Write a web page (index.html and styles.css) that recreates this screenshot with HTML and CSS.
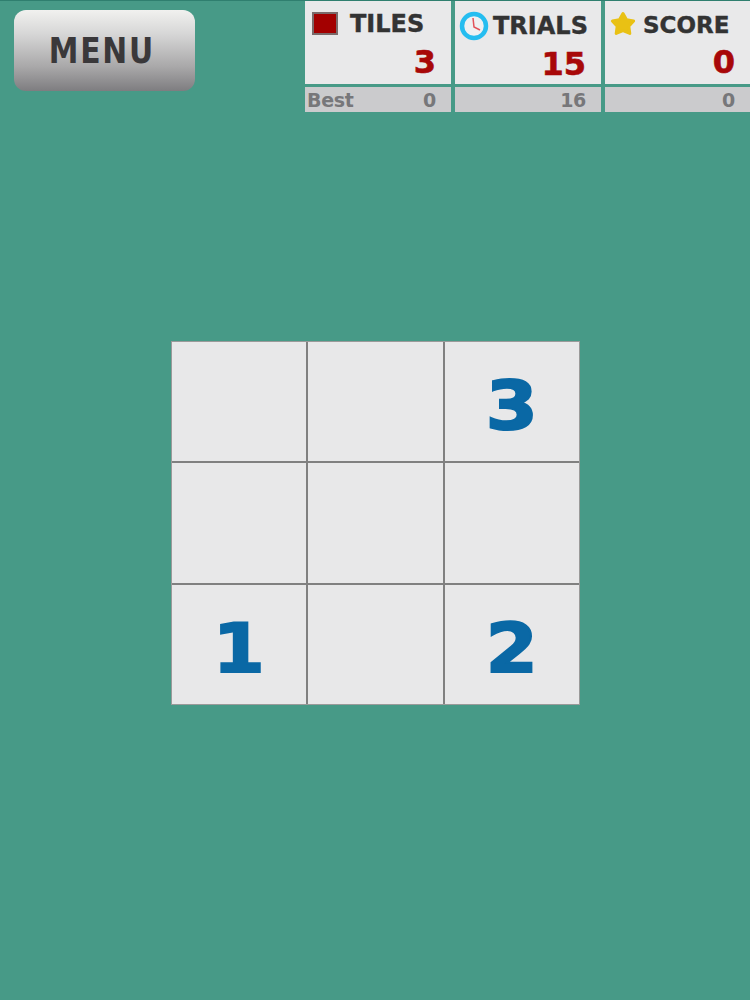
FILE: index.html
```html
<!DOCTYPE html>
<html lang="en">
<head>
    <meta charset="UTF-8">
    <meta name="viewport" content="width=device-width, initial-scale=1.0">
    <title>Tiles</title>
    <link rel="stylesheet" href="styles.css">
</head>
<body>

<div class="topbar">
    <button class="menu-btn"><span class="menu-text">MENU</span></button>
    <div class="stats">
        <div class="stat">
            <div class="stat-box">
                <div class="stat-title">
                    <span class="tile-icon"></span>
                    <span class="tiles-label">TILES</span>
                </div>
                <div class="stat-value">3</div>
            </div>
            <div class="stat-best"><span>Best</span><span>0</span></div>
        </div>
        <div class="stat">
            <div class="stat-box">
                <div class="stat-title">
                    <svg class="clock-icon" viewBox="0 0 30 30">
                        <circle cx="15" cy="15" r="12" fill="#eef0f2" stroke="#25bdf0" stroke-width="4.5"/>
                        <path d="M14 7 L15 16 L21 19" fill="none" stroke="#e2525a" stroke-width="1.5"/>
                    </svg>
                    <span class="trials-label">TRIALS</span>
                </div>
                <div class="stat-value value-trials">15</div>
            </div>
            <div class="stat-best"><span></span><span>16</span></div>
        </div>
        <div class="stat">
            <div class="stat-box">
                <div class="stat-title">
                    <svg class="star-icon" viewBox="0 0 26 26">
                        <path d="M13 2.5 L16.4 8.6 L23.6 10 L18.8 15.2 L19.8 22.4 L13 19.6 L6.2 22.4 L7.2 15.2 L2.4 10 L9.6 8.6 Z" fill="#e9c114" stroke="#e9c114" stroke-width="3" stroke-linejoin="round"/>
                    </svg>
                    <span class="score-label">SCORE</span>
                </div>
                <div class="stat-value">0</div>
            </div>
            <div class="stat-best"><span></span><span>0</span></div>
        </div>
    </div>
</div>

<div class="board">
    <div class="cell"></div>
    <div class="cell"></div>
    <div class="cell"><span class="digit">3</span></div>
    <div class="cell"></div>
    <div class="cell"></div>
    <div class="cell"></div>
    <div class="cell"><span class="digit">1</span></div>
    <div class="cell"></div>
    <div class="cell"><span class="digit">2</span></div>
</div>

</body>
</html>
```

FILE: styles.css
```css
html, body { margin: 0; padding: 0; }
body { width: 750px; height: 1000px; overflow: hidden; background-color: #479a87; font-family: "DejaVu Sans", sans-serif; }

.topbar { display: flex; justify-content: space-between; align-items: flex-start; height: 113px; border-top: 1px solid #2f7f6f; box-sizing: border-box; }

.menu-btn { width: 181px; height: 81px; margin: 9px 0 0 14px; padding: 0 5px 0 0; border: none; border-radius: 12px; background: linear-gradient(#f1f1ef 0%, #d6d6d6 30%, #a9a8a9 70%, #7e7d80 100%); color: #3a383a; font-family: "DejaVu Sans", sans-serif; font-stretch: condensed; font-weight: bold; font-size: 36px; letter-spacing: 2px; }
.menu-text { display: inline-block; transform: scaleX(0.92); }

.stats { display: flex; gap: 4px; width: 445px; }
.stat { flex: none; width: 146px; display: flex; flex-direction: column; gap: 3px; }
.stat:last-child { width: 145px; }
.stat-box { height: 83px; background-color: #e9e9ea; }
.stat-title { display: flex; align-items: center; height: 45px; color: #333; font-weight: bold; font-size: 24px; -webkit-text-stroke: 0.4px #333; }
.stat-value { padding-right: 15px; color: #a80808; font-weight: bold; font-size: 32px; line-height: 32px; text-align: right; -webkit-text-stroke: 0.6px #a80808; }
.value-trials { margin-top: 2px; }
.stat-best { display: flex; justify-content: space-between; align-items: center; height: 25px; padding: 0 15px 0 2px; background-color: #cbcbcd; color: #77777a; font-weight: bold; font-size: 19px; letter-spacing: -0.3px; }

.tile-icon { box-sizing: border-box; width: 26px; height: 23px; margin: 0 12px 0 7px; background-color: #a30000; border: 2px solid #7a6a6a; }
.clock-icon { width: 30px; height: 30px; margin: 4px 0 0 4px; }
.star-icon { width: 28px; height: 26px; margin-left: 4px; }
.trials-label { margin: 4px 0 0 4px; }
.score-label { margin: 3px 0 0 6px; font-size: 23px; }

.board { display: grid; grid-template-columns: 134px 135px 134px; grid-template-rows: 119px 120px 119px; gap: 2px; width: 409px; margin: 228px 0 0 171px; box-sizing: border-box; background-color: #808080; border: 1px solid #9a9a9a; }
.cell { display: flex; align-items: center; justify-content: center; box-sizing: border-box; padding-top: 7px; background-color: #e8e8e9; color: #0a68a5; font-weight: bold; font-size: 68px; }
.digit { display: inline-block; transform: scaleX(1.1); -webkit-text-stroke: 2px #0a68a5; }
```
